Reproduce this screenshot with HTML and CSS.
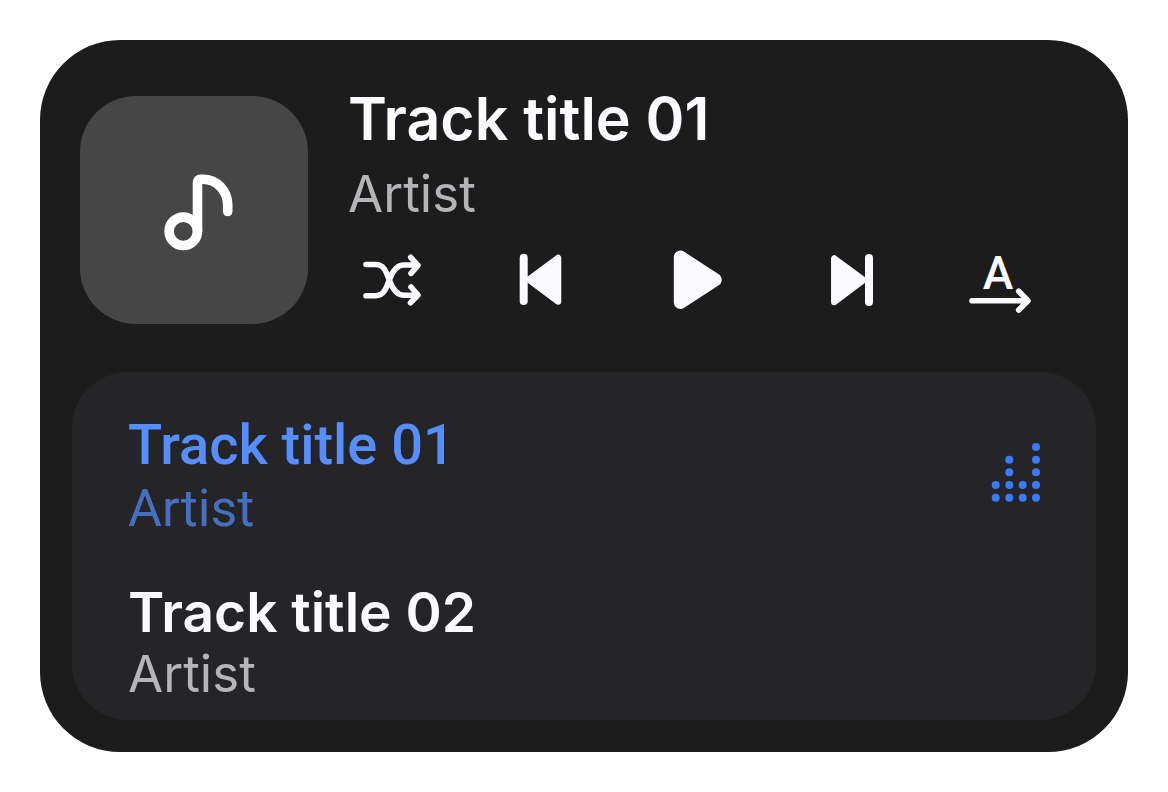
FILE: index.html
```html
<!DOCTYPE html>
<html lang="en">
<head>
<meta charset="utf-8">
<title>Music player</title>
<meta name="viewport" content="width=device-width, initial-scale=1">
<link rel="stylesheet" href="styles.css">
</head>
<body>
<main class="player">
  <section class="now-playing">
    <div class="cover">
      <svg class="cover-icon" viewBox="0 0 96 96" aria-hidden="true">
        <circle cx="37.3" cy="69.3" r="14.2"/>
        <path d="M51.5 69.3V20.3Q51.5 17.3 54.5 17.3H57C71 17.3 81.7 29 81.7 43V49.5"/>
      </svg>
    </div>
    <div class="details">
      <h1 class="current-title">Track title 01</h1>
      <p class="current-artist">Artist</p>
      <div class="controls">
        <button class="control" type="button" aria-label="Shuffle">
          <svg class="icon" viewBox="0 0 72 72" aria-hidden="true">
            <path class="line" d="M10 20.5H20C27.500 20.500 30 27 33.300 36C36.500 45 40.500 51.300 48 51.300H61M10 51.700H20C27.500 51.700 30 45 33.300 36C36.500 27 40.500 21 48 21H61M54.700 13.300L62 21.300L55 29.300M55 43L62 51L54.500 58.700"/>
          </svg>
        </button>
        <button class="control" type="button" aria-label="Previous track">
          <svg class="icon" viewBox="0 0 72 72" aria-hidden="true">
            <path class="bar" d="M15.700 13.700V57"/>
            <path class="solid" d="M21 35.700L50 14V57.500Z"/>
          </svg>
        </button>
        <button class="control" type="button" aria-label="Play">
          <svg class="icon" viewBox="0 0 72 72" aria-hidden="true">
            <path class="solid solid-large" d="M20.300 13V58.500L55.200 35.800Z"/>
          </svg>
        </button>
        <button class="control" type="button" aria-label="Next track">
          <svg class="icon" viewBox="0 0 72 72" aria-hidden="true">
            <path class="bar" d="M57 14V58"/>
            <path class="solid" d="M51.500 36L22.300 14.500V58Z"/>
          </svg>
        </button>
        <button class="control" type="button" aria-label="Play in order">
          <svg class="icon" viewBox="0 0 72 72" aria-hidden="true">
            <text class="letter" x="34" y="45" text-anchor="middle">A</text>
            <path class="line" d="M8 56.700H63M54.700 47.300L64 56.700L54.700 66"/>
          </svg>
        </button>
      </div>
    </div>
  </section>
  <ul class="playlist">
    <li class="track track-active">
      <div class="track-text">
        <h2 class="track-title">Track title 01</h2>
        <p class="track-artist">Artist</p>
      </div>
      <svg class="levels" viewBox="0 0 50 60" aria-hidden="true">
        <circle cx="4.700" cy="43" r="4"/><circle cx="4.700" cy="55.700" r="4"/>
        <circle cx="18.300" cy="17.700" r="4"/><circle cx="18.300" cy="30.300" r="4"/><circle cx="18.300" cy="43" r="4"/><circle cx="18.300" cy="55.700" r="4"/>
        <circle cx="31.700" cy="43" r="4"/><circle cx="31.700" cy="55.700" r="4"/>
        <circle cx="45" cy="5" r="4"/><circle cx="45" cy="17.700" r="4"/><circle cx="45" cy="30.300" r="4"/><circle cx="45" cy="43" r="4"/><circle cx="45" cy="55.700" r="4"/>
      </svg>
    </li>
    <li class="track">
      <div class="track-text">
        <h2 class="track-title">Track title 02</h2>
        <p class="track-artist">Artist</p>
      </div>
    </li>
  </ul>
</main>
</body>
</html>
```
FILE: styles.css
```css
* {
  box-sizing: border-box;
  margin: 0;
  padding: 0;
}

body {
  padding: 40px;
  background: #fff;
  font-family: Inter, Roboto, sans-serif;
}

.player {
  padding: 48px 32px 32px;
  border-radius: 80px;
  background: #1c1c1c;
  color: #fbfaff;
}

.now-playing {
  display: flex;
  gap: 40px;
  padding: 0 60px 48px 8px;
}

.cover {
  display: flex;
  align-items: center;
  justify-content: center;
  flex: none;
  width: 228px;
  height: 228px;
  margin-top: 8px;
  border-radius: 56px;
  background: #464646;
}

.cover-icon {
  width: 96px;
  height: 96px;
  fill: none;
  stroke: #fff;
  stroke-width: 9.6;
  stroke-linecap: round;
}

.details {
  flex: 1;
}

.current-title {
  font-size: 59px;
  line-height: 62px;
  font-weight: 600;
}

.current-artist {
  margin-top: 14px;
  font-size: 51px;
  line-height: 60px;
  color: #b5b4b9;
}

.controls {
  display: flex;
  justify-content: space-between;
  padding: 20px 0 0 8px;
}

.control {
  border: 0;
  background: none;
  color: inherit;
  cursor: pointer;
}

.icon {
  display: block;
  width: 72px;
  height: 72px;
}

.line,
.bar {
  fill: none;
  stroke: currentColor;
  stroke-width: 5.6;
  stroke-linecap: round;
  stroke-linejoin: round;
}

.bar {
  stroke-width: 8;
}

.solid {
  fill: currentColor;
  stroke: currentColor;
  stroke-width: 6.5;
  stroke-linejoin: round;
}

.solid-large {
  stroke-width: 13;
}

.letter {
  fill: currentColor;
  font: 500 46px Roboto, sans-serif;
}

.playlist {
  display: flex;
  flex-direction: column;
  gap: 40px;
  padding: 40px 55px 16px 56px;
  border-radius: 56px;
  background: #252527;
  list-style: none;
}

.track {
  display: flex;
  justify-content: space-between;
}

.track-title {
  font-size: 55px;
  line-height: 64px;
  font-weight: 600;
}

.track-artist {
  font-size: 51px;
  line-height: 60px;
  color: #b6b5ba;
}

.track-active {
  font-family: Roboto, sans-serif;
  color: #568eff;
}

.track-active .track-title {
  font-size: 56px;
  line-height: 66px;
  font-weight: 500;
}

.track-active .track-artist {
  font-size: 52px;
  line-height: 62px;
  color: #476fbf;
}

.levels {
  width: 50px;
  height: 60px;
  margin-top: 30px;
  fill: #377cff;
}
```
